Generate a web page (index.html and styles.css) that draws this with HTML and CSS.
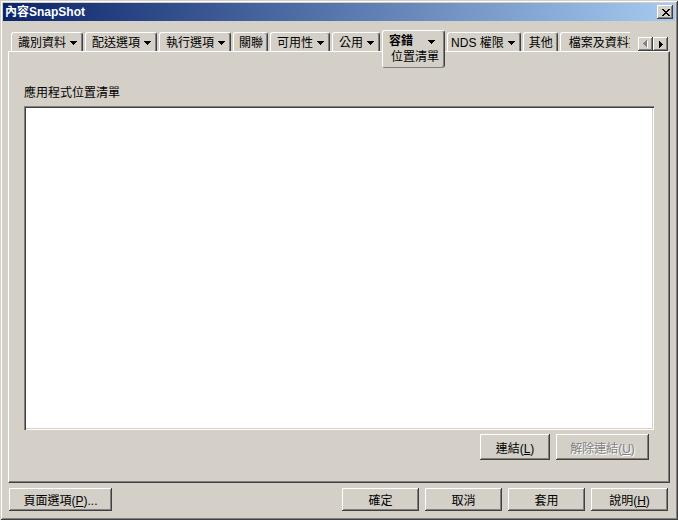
FILE: index.html
```html
<!DOCTYPE html>
<html lang="zh-Hant">
<head>
    <meta charset="UTF-8">
    <title>內容SnapShot</title>
    <link rel="stylesheet" href="styles.css">
</head>
<body>
    <div class="window">
        <div class="titlebar">
            <span class="title">內容SnapShot</span>
            <button class="close-btn">
                <svg width="8" height="7" viewBox="0 0 8 7" shape-rendering="crispEdges"><path d="M0 0h2v1H0zM6 0h2v1H6zM1 1h2v1H1zM5 1h2v1H5zM2 2h4v1H2zM3 3h2v1H3zM2 4h4v1H2zM1 5h2v1H1zM5 5h2v1H5zM0 6h2v1H0zM6 6h2v1H6z"/></svg>
            </button>
        </div>

        <!-- tab strip -->
        <div class="tabbar">
            <div class="tabs">
                <div class="tab">識別資料<svg class="arrow" width="7" height="4" viewBox="0 0 7 4"><path d="M0 0h7v1H0zM1 1h5v1H1zM2 2h3v1H2zM3 3h1v1H3z"/></svg></div>
                <div class="tab">配送選項<svg class="arrow" width="7" height="4" viewBox="0 0 7 4"><path d="M0 0h7v1H0zM1 1h5v1H1zM2 2h3v1H2zM3 3h1v1H3z"/></svg></div>
                <div class="tab">執行選項<svg class="arrow" width="7" height="4" viewBox="0 0 7 4"><path d="M0 0h7v1H0zM1 1h5v1H1zM2 2h3v1H2zM3 3h1v1H3z"/></svg></div>
                <div class="tab plain">關聯</div>
                <div class="tab">可用性<svg class="arrow" width="7" height="4" viewBox="0 0 7 4"><path d="M0 0h7v1H0zM1 1h5v1H1zM2 2h3v1H2zM3 3h1v1H3z"/></svg></div>
                <div class="tab">公用<svg class="arrow" width="7" height="4" viewBox="0 0 7 4"><path d="M0 0h7v1H0zM1 1h5v1H1zM2 2h3v1H2zM3 3h1v1H3z"/></svg></div>
                <div class="tab active">
                    <div class="tab-head"><b>容錯</b><svg class="arrow" width="7" height="4" viewBox="0 0 7 4"><path d="M0 0h7v1H0zM1 1h5v1H1zM2 2h3v1H2zM3 3h1v1H3z"/></svg></div>
                    <div class="tab-sub">位置清單</div>
                </div>
                <div class="tab nds">NDS 權限<svg class="arrow" width="7" height="4" viewBox="0 0 7 4"><path d="M0 0h7v1H0zM1 1h5v1H1zM2 2h3v1H2zM3 3h1v1H3z"/></svg></div>
                <div class="tab plain">其他</div>
                <div class="tab plain last">檔案及資料夾</div>
            </div>
            <div class="scroller">
                <span class="scroll-btn disabled">
                    <svg width="5" height="8" viewBox="0 0 5 8" shape-rendering="crispEdges"><path class="hi" d="M4 1h1v7H4zM3 2h1v5H3zM2 3h1v3H2zM1 4h1v1H1z"/><path d="M3 0h1v7H3zM2 1h1v5H2zM1 2h1v3H1zM0 3h1v1H0z"/></svg>
                </span>
                <span class="scroll-btn">
                    <svg width="4" height="7" viewBox="0 0 4 7" shape-rendering="crispEdges"><path d="M0 0h1v7H0zM1 1h1v5H1zM2 2h1v3H2zM3 3h1v1H3z"/></svg>
                </span>
            </div>
        </div>

        <div class="panel">
            <div class="field-label">應用程式位置清單</div>
            <div class="listbox"></div>
            <div class="panel-actions">
                <button class="btn btn-link">連結(<u>L</u>)</button>
                <button class="btn btn-unlink" disabled>解除連結(<u>U</u>)</button>
            </div>
        </div>

        <div class="footer">
            <button class="btn btn-page">頁面選項(<u>P</u>)...</button>
            <div class="footer-right">
                <button class="btn btn-dlg">確定</button>
                <button class="btn btn-dlg">取消</button>
                <button class="btn btn-dlg">套用</button>
                <button class="btn btn-dlg">說明(<u>H</u>)</button>
            </div>
        </div>
    </div>
</body>
</html>
```

FILE: styles.css
```css
body {
    margin: 0;
    background: #d4d0c8;
    font-family: "Liberation Sans", "Noto Sans CJK TC", sans-serif;
    font-size: 12px;
    color: #000;
}

.window {
    width: 678px;
    height: 520px;
    box-sizing: border-box;
    padding: 3px;
    background: #d4d0c8;
    box-shadow: inset 1px 1px #d4d0c8, inset -1px -1px #404040, inset 2px 2px #fff, inset -2px -2px #808080;
    display: flex;
    flex-direction: column;
}

.titlebar {
    height: 18px;
    display: flex;
    align-items: center;
    justify-content: space-between;
    padding: 0 2px 0 2px;
    background: linear-gradient(to right, #0a246a, #a6caf0);
}

.title {
    color: #fff;
    font-weight: bold;
    line-height: 18px;
}

.close-btn {
    width: 16px;
    height: 14px;
    padding: 0 0 0 1px;
    border: 0;
    background: #d4d0c8;
    box-shadow: inset -1px -1px #404040, inset 1px 1px #fff, inset -2px -2px #808080;
    display: flex;
    align-items: center;
    justify-content: center;
}

/* tabs: the strip is taller than its row so the open tab's
   drop part can hang over the page below */
.tabbar {
    display: flex;
    align-items: flex-start;
    height: 21px;
    margin: 9px 0 0 8px;
}

.tabs {
    display: flex;
    align-items: flex-start;
    gap: 2px;
    width: 619px;
    height: 39px;
    box-sizing: border-box;
    padding-top: 2px;
    overflow: hidden;
    flex-shrink: 0;
}

.tab {
    flex-shrink: 0;
    display: flex;
    align-items: center;
    height: 19px;
    box-sizing: border-box;
    padding: 1px 5px 0 6px;
    line-height: 16px;
    white-space: nowrap;
    border-top: 1px solid #fff;
    border-left: 1px solid #fff;
    border-right: 1px solid #404040;
    border-radius: 3px 3px 0 0;
    box-shadow: inset -1px 0 #808080;
}

.tab .arrow {
    margin-left: 4px;
}

.tab.plain {
    padding: 1px 4px 0 5px;
}

.tab.nds {
    padding-left: 3px;
}

.tab.last {
    padding-left: 8px;
}

.tab.active {
    position: relative;
    z-index: 1;
    margin-top: -2px;
    height: 38px;
    flex-direction: column;
    align-items: stretch;
    padding: 3px 5px 2px 6px;
    background: #d4d0c8;
    border-bottom: 1px solid #808080;
    border-radius: 3px;
    line-height: 15px;
}

.tab-head {
    display: flex;
    align-items: center;
    justify-content: space-between;
}

.tab-head .arrow {
    margin-right: 4px;
}

.tab-sub {
    margin: 1px 0 0 2px;
}

.scroller {
    display: flex;
    margin: 7px 0 0 8px;
}

.scroll-btn {
    width: 15px;
    height: 14px;
    display: flex;
    align-items: center;
    justify-content: center;
    background: #d4d0c8;
    box-shadow: inset -1px -1px #404040, inset 1px 1px #fff, inset -2px -2px #808080;
}

.scroll-btn.disabled path {
    fill: #808080;
}

.scroll-btn.disabled path.hi {
    fill: #fff;
}

/* property page */
.panel {
    width: 662px;
    height: 432px;
    box-sizing: border-box;
    margin-left: 5px;
    padding: 33px 14px 0 15px;
    border-top: 1px solid #fff;
    border-left: 1px solid #fff;
    border-right: 1px solid #404040;
    border-bottom: 1px solid #404040;
    box-shadow: inset -1px -1px #808080;
}

.field-label {
    line-height: 16px;
    margin-bottom: 5px;
}

.listbox {
    width: 630px;
    height: 324px;
    box-sizing: border-box;
    background: #fff;
    box-shadow: inset 1px 1px #808080, inset 2px 2px #404040, inset -1px -1px #fff, inset -2px -2px #d4d0c8;
}

.panel-actions {
    display: flex;
    justify-content: flex-end;
    gap: 6px;
    margin-top: 4px;
    padding-right: 6px;
}

.btn {
    height: 23px;
    padding: 0;
    border: 0;
    font: inherit;
    color: #000;
    background: #d4d0c8;
    box-shadow: inset -1px -1px #404040, inset 1px 1px #fff, inset -2px -2px #808080;
    cursor: pointer;
}

.btn u {
    text-decoration-thickness: 1px;
    text-underline-offset: 1px;
}

.btn-link {
    width: 70px;
    height: 26px;
}

.btn-unlink {
    width: 93px;
    height: 26px;
    color: #808080;
    text-shadow: 1px 1px #fff;
    cursor: default;
}

.footer {
    display: flex;
    justify-content: space-between;
    margin-top: 5px;
    padding: 0 7px 0 6px;
}

.footer-right {
    display: flex;
    gap: 6px;
}

.btn-page {
    width: 103px;
}

.btn-dlg {
    width: 77px;
}
```
